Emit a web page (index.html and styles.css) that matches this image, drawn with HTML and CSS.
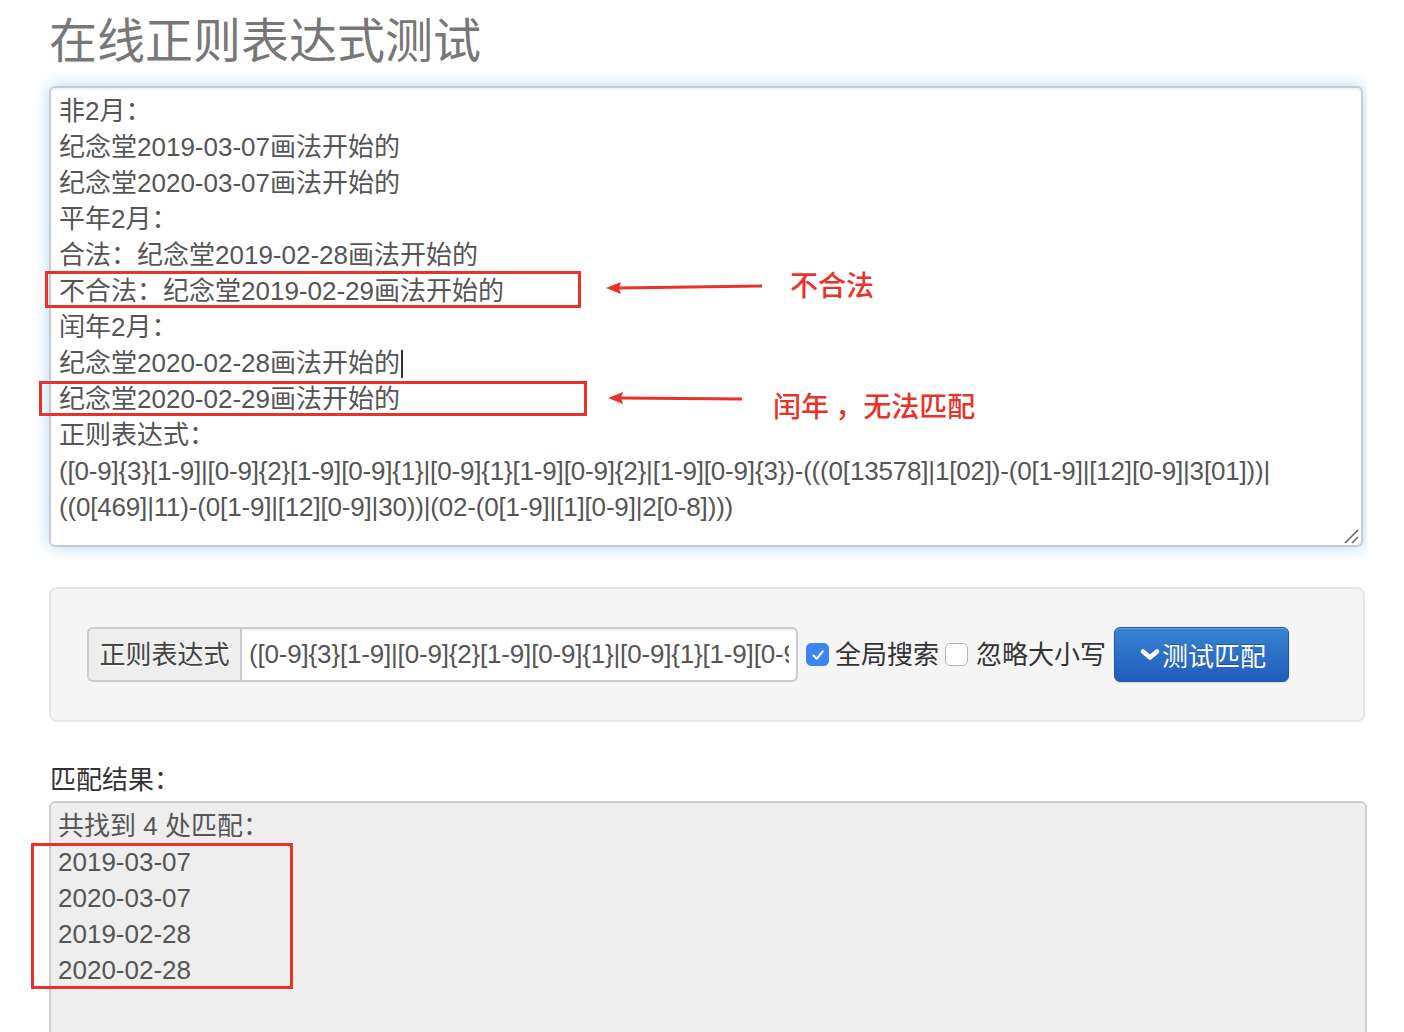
FILE: index.html
```html
<!DOCTYPE html>
<html lang="zh-CN">
<head>
<meta charset="utf-8">
<title>在线正则表达式测试</title>
<link rel="stylesheet" href="styles.css">
</head>
<body>
<div class="page">
  <h1 class="title">在线正则表达式测试</h1>

  <div class="source">
    <div class="line">非2月：</div>
    <div class="line">纪念堂2019-03-07画法开始的</div>
    <div class="line">纪念堂2020-03-07画法开始的</div>
    <div class="line">平年2月：</div>
    <div class="line">合法：纪念堂2019-02-28画法开始的</div>
    <div class="line">不合法：纪念堂2019-02-29画法开始的</div>
    <div class="line">闰年2月：</div>
    <div class="line">纪念堂2020-02-28画法开始的<span class="caret"></span></div>
    <div class="line">纪念堂2020-02-29画法开始的</div>
    <div class="line">正则表达式：</div>
    <div class="line regex">([0-9]{3}[1-9]|[0-9]{2}[1-9][0-9]{1}|[0-9]{1}[1-9][0-9]{2}|[1-9][0-9]{3})-(((0[13578]|1[02])-(0[1-9]|[12][0-9]|3[01]))|</div>
    <div class="line regex">((0[469]|11)-(0[1-9]|[12][0-9]|30))|(02-(0[1-9]|[1][0-9]|2[0-8])))</div>
    <svg class="grip" width="16" height="16" viewBox="0 0 16 16">
      <line x1="2" y1="15" x2="15" y2="2" stroke="#666" stroke-width="1.6"/>
      <line x1="9" y1="15" x2="15" y2="9" stroke="#666" stroke-width="1.6"/>
    </svg>
  </div>

  <div class="well">
    <div class="input-group">
      <span class="addon">正则表达式</span>
      <input class="regex-input" type="text" value="([0-9]{3}[1-9]|[0-9]{2}[1-9][0-9]{1}|[0-9]{1}[1-9][0-9]{2}|[1-9][0-9]{3})-(((0[13578]|1[02])-(0[1-9]|[12][0-9]|3[01]))|((0[469]|11)-(0[1-9]|[12][0-9]|30))|(02-(0[1-9]|[1][0-9]|2[0-8])))">
    </div>
    <label class="check">
      <span class="box checked">
        <svg width="16" height="16" viewBox="0 0 16 16"><path d="M3.5 8.5 L6.8 11.8 L12.8 4.2" fill="none" stroke="#fff" stroke-width="2" stroke-linecap="round" stroke-linejoin="round"/></svg>
      </span>
      <span class="check-text">全局搜索</span>
    </label>
    <label class="check">
      <span class="box"></span>
      <span class="check-text">忽略大小写</span>
    </label>
    <button class="btn" type="button">
      <svg class="chev" width="22" height="16" viewBox="0 0 22 16"><path d="M4 4.5 L11 10.5 L18 4.5" fill="none" stroke="#fff" stroke-width="4.5" stroke-linecap="round" stroke-linejoin="round"/></svg>
      <span>测试匹配</span>
    </button>
  </div>

  <div class="result-label">匹配结果：</div>
  <div class="result">
    <div class="line">共找到 4 处匹配：</div>
    <div class="line">2019-03-07</div>
    <div class="line">2020-03-07</div>
    <div class="line">2019-02-28</div>
    <div class="line">2020-02-28</div>
  </div>

  <div class="mark mark-1"></div>
  <div class="mark mark-2"></div>
  <div class="mark mark-3"></div>
  <svg class="arrows" width="1404" height="1032" viewBox="0 0 1404 1032">
    <line x1="762" y1="286" x2="618" y2="288" stroke="#e8332a" stroke-width="3"/>
    <path d="M606 288 L621 282 L619 288 L621 294 Z" fill="#e8332a"/>
    <line x1="742" y1="399" x2="620" y2="398" stroke="#e8332a" stroke-width="3"/>
    <path d="M608 398 L623 392 L621 398 L623 404 Z" fill="#e8332a"/>
  </svg>
  <div class="note note-1">不合法</div>
  <div class="note note-2">闰年 ，无法匹配</div>
</div>
</body>
</html>
```

FILE: styles.css
```css
html, body {
  margin: 0;
  padding: 0;
  background: #fff;
}

body {
  font-family: "Liberation Sans", "Noto Sans CJK SC", sans-serif;
  font-size: 26px;
  line-height: 36px;
  color: #555;
}

.page {
  position: relative;
  width: 1318px;
  padding-left: 49px;
  height: 1032px;
  overflow: hidden;
}

.title {
  margin: 12px 0 14px;
  font-size: 48px;
  line-height: 60px;
  font-weight: normal;
  color: #777;
}

.source {
  position: relative;
  box-sizing: border-box;
  width: 1314px;
  height: 461px;
  padding: 5px 8px 3px;
  border: 2px solid #c9cdd2;
  border-radius: 6px;
  background: #fff;
  box-shadow: inset 0 2px 2px rgba(0, 0, 0, 0.06), 0 0 16px rgba(82, 168, 236, 0.45);
  color: #555;
}

.line {
  white-space: nowrap;
  height: 36px;
}

.regex {
  letter-spacing: -0.18px;
}

.caret {
  display: inline-block;
  width: 0;
  height: 28px;
  border-left: 2px solid #333;
  vertical-align: -6px;
  margin-left: 1px;
}

.grip {
  position: absolute;
  right: 2px;
  bottom: 1px;
}

.well {
  box-sizing: border-box;
  width: 1316px;
  height: 135px;
  margin-top: 40px;
  padding: 38px 36px;
  background: #f5f5f5;
  border: 2px solid #e6e6e6;
  border-radius: 8px;
  display: flex;
  align-items: center;
}

.input-group {
  display: flex;
  height: 55px;
}

.addon {
  box-sizing: border-box;
  width: 153px;
  height: 55px;
  padding: 0 10px;
  display: flex;
  align-items: center;
  justify-content: center;
  background: #eee;
  border: 2px solid #ccc;
  border-right: none;
  border-radius: 6px 0 0 6px;
  color: #444;
  font-size: 26px;
  text-shadow: 0 1px 0 #fff;
}

.regex-input {
  box-sizing: border-box;
  width: 558px;
  height: 55px;
  padding: 0 7px;
  margin: 0;
  border: 2px solid #ccc;
  border-radius: 0 6px 6px 0;
  background: #fff;
  font-family: "Liberation Sans", "Noto Sans CJK SC", sans-serif;
  font-size: 26px;
  color: #555;
  letter-spacing: -0.18px;
  box-shadow: inset 0 2px 2px rgba(0, 0, 0, 0.06);
  outline: none;
}

.check {
  display: flex;
  align-items: center;
  margin-left: 8px;
  color: #333;
  font-size: 26px;
}

.check + .check {
  margin-left: 6px;
}

.box {
  box-sizing: border-box;
  width: 23px;
  height: 23px;
  border: 1.5px solid #b5b5b5;
  border-radius: 5px;
  background: #fff;
  display: flex;
  align-items: center;
  justify-content: center;
  margin-right: 6px;
}

.box.checked {
  background: #3d86f0;
  border-color: #3d86f0;
}

.check + .check .box {
  margin-right: 8px;
}

.btn {
  box-sizing: border-box;
  width: 175px;
  height: 55px;
  margin-left: 8px;
  padding: 0 0 0 2px;
  border: 1px solid #1c55a6;
  border-radius: 6px;
  background: linear-gradient(#3884d3, #1f5dbc);
  box-shadow: inset 0 1px 0 rgba(255, 255, 255, 0.25), 0 1px 2px rgba(0, 0, 0, 0.1);
  color: #fff;
  font-family: "Liberation Sans", "Noto Sans CJK SC", sans-serif;
  font-size: 26px;
  display: flex;
  align-items: center;
  justify-content: center;
  gap: 1px;
  text-shadow: 0 -1px 0 rgba(0, 0, 0, 0.25);
}

.chev {
  display: block;
}

.result-label {
  margin-top: 40px;
  color: #333;
  height: 36px;
  line-height: 36px;
  margin-left: 1px;
}

.result {
  box-sizing: border-box;
  width: 1318px;
  height: 320px;
  margin-top: 3px;
  padding: 5px 7px;
  border: 2px solid #cdcdcd;
  border-radius: 6px;
  background: #eee;
  color: #555;
}

.mark {
  position: absolute;
  box-sizing: border-box;
  border: 3px solid #e8332a;
}

.mark-1 { left: 45px; top: 271px; width: 536px; height: 37px; }
.mark-2 { left: 39px; top: 381px; width: 548px; height: 35px; }
.mark-3 { left: 31px; top: 843px; width: 262px; height: 146px; }

.arrows {
  position: absolute;
  left: 0;
  top: 0;
  pointer-events: none;
}

.note {
  position: absolute;
  color: #e8332a;
  font-family: "Noto Sans CJK SC", sans-serif;
  font-size: 28px;
  line-height: 36px;
  font-weight: 500;
  white-space: nowrap;
}

.note-1 { left: 790px; top: 266px; }
.note-2 { left: 773px; top: 387px; }
```
